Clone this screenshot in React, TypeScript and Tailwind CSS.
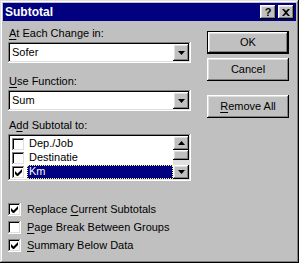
import React from "react";

const raised =
  "shadow-[inset_-1px_-1px_0_#000,inset_1px_1px_0_#fff,inset_-2px_-2px_0_#808080,inset_2px_2px_0_#dfdfdf]";
const sunken =
  "shadow-[inset_-1px_-1px_0_#fff,inset_1px_1px_0_#808080,inset_-2px_-2px_0_#dfdfdf,inset_2px_2px_0_#000]";

function U({ children }: { children: React.ReactNode }) {
  return <span className="underline underline-offset-2">{children}</span>;
}

function DownArrow() {
  return (
    <svg width="7" height="4" viewBox="0 0 7 4">
      <path d="M0 0h7L3.5 4z" fill="#000" />
    </svg>
  );
}

function UpArrow() {
  return (
    <svg width="7" height="4" viewBox="0 0 7 4">
      <path d="M0 4h7L3.5 0z" fill="#000" />
    </svg>
  );
}

function Check({ on }: { on?: boolean }) {
  return (
    <div className={`w-[13px] h-[13px] bg-white shrink-0 flex items-center justify-center ${sunken}`}>
      {on && (
        <svg width="7" height="7" viewBox="0 0 7 7">
          <path d="M0 2v3l2 2h1l4-4V0L2.5 4.5z" fill="#000" />
        </svg>
      )}
    </div>
  );
}

function Combo({ value }: { value: string }) {
  return (
    <div className={`h-[21px] bg-white p-[2px] flex ${sunken}`}>
      <div className="flex-1 pl-[2px] leading-[17px]">{value}</div>
      <div className={`w-[16px] h-[17px] bg-[#c0c0c0] flex items-center justify-center ${raised}`}>
        <DownArrow />
      </div>
    </div>
  );
}

function Btn({ children, def }: { children: React.ReactNode; def?: boolean }) {
  if (def) {
    return (
      <div className="border border-black">
        <div className={`h-[21px] bg-[#c0c0c0] flex items-center justify-center ${raised}`}>{children}</div>
      </div>
    );
  }
  return (
    <div className={`h-[23px] bg-[#c0c0c0] flex items-center justify-center ${raised}`}>{children}</div>
  );
}

export default function App() {
  return (
    <div
      className="w-[299px] h-[263px] bg-[#c0c0c0] p-[3px] text-[11px] text-black shadow-[inset_-1px_-1px_0_#000,inset_1px_1px_0_#dfdfdf,inset_-2px_-2px_0_#808080,inset_2px_2px_0_#fff]"
      style={{ fontFamily: '"Liberation Sans", Arial, sans-serif' }}
    >
      {/* Title bar */}
      <div className="h-[18px] bg-[#000080] flex items-center pl-[2px] pr-[2px]">
        <div className="flex-1 text-white font-bold text-[12px]">Subtotal</div>
        <div className={`w-[16px] h-[14px] bg-[#c0c0c0] flex items-center justify-center font-bold text-[11px] leading-none ${raised}`}>
          ?
        </div>
        <div className={`ml-[2px] w-[16px] h-[14px] bg-[#c0c0c0] flex items-center justify-center ${raised}`}>
          <svg width="8" height="7" viewBox="0 0 8 7">
            <path d="M0 0h2l2 2 2-2h2L5 3.5 8 7H6L4 5 2 7H0l3-3.5z" fill="#000" />
          </svg>
        </div>
      </div>

      <div className="flex pl-[5px] pt-[6px]">
        {/* Left column */}
        <div className="w-[183px] flex flex-col">
          <div className="pl-[1px] h-[15px] leading-[13px]">
            <U>A</U>t Each Change in:
          </div>
          <Combo value="Sofer" />
          <div className="pl-[1px] mt-[12px] h-[15px] leading-[13px]">
            <U>U</U>se Function:
          </div>
          <Combo value="Sum" />
          <div className="pl-[1px] mt-[8px] h-[15px] leading-[13px]">
            A<U>d</U>d Subtotal to:
          </div>
          <div className={`h-[47px] bg-white p-[2px] flex ${sunken}`}>
            <div className="flex-1 flex flex-col pt-[1px]">
              {[
                { t: "Dep./Job", on: false, sel: false },
                { t: "Destinatie", on: false, sel: false },
                { t: "Km", on: true, sel: true },
              ].map((r) => (
                <div key={r.t} className="h-[14px] flex items-center pl-[2px]">
                  <Check on={r.on} />
                  <div
                    className={`ml-[2px] flex-1 h-[14px] leading-[13px] pl-[2px] ${
                      r.sel ? "bg-[#000080] text-white outline outline-1 outline-dotted outline-[#ffff80] -outline-offset-1" : ""
                    }`}
                  >
                    {r.t}
                  </div>
                </div>
              ))}
            </div>
            <div className="w-[16px] flex flex-col bg-[#c0c0c0]">
              <div className={`h-[14px] flex items-center justify-center ${raised}`}>
                <UpArrow />
              </div>
              <div className="flex-1 bg-[#e0e0e0]">
                <div className={`h-[10px] bg-[#c0c0c0] ${raised}`} />
              </div>
              <div className={`h-[14px] flex items-center justify-center ${raised}`}>
                <DownArrow />
              </div>
            </div>
          </div>

          <div className="mt-[22px] flex flex-col gap-[5px]">
            <div className="flex items-center h-[13px]">
              <Check on />
              <div className="ml-[6px]">
                Replace <U>C</U>urrent Subtotals
              </div>
            </div>
            <div className="flex items-center h-[13px]">
              <Check />
              <div className="ml-[6px]">
                <U>P</U>age Break Between Groups
              </div>
            </div>
            <div className="flex items-center h-[13px]">
              <Check on />
              <div className="ml-[6px]">
                <U>S</U>ummary Below Data
              </div>
            </div>
          </div>
        </div>

        {/* Right column */}
        <div className="ml-[16px] w-[82px] flex flex-col pt-[4px]">
          <Btn def>OK</Btn>
          <div className="mt-[4px]">
            <Btn>Cancel</Btn>
          </div>
          <div className="mt-[14px]">
            <Btn>
              <span>
                <U>R</U>emove All
              </span>
            </Btn>
          </div>
        </div>
      </div>
    </div>
  );
}
